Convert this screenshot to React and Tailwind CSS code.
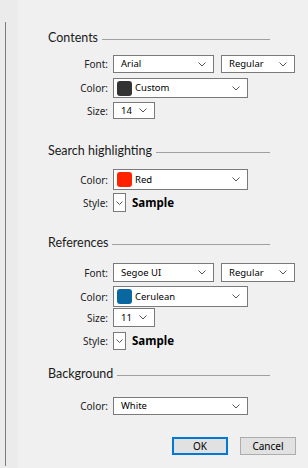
import { useState } from "react";

const Chevron = () => (
  <svg width="8" height="5" viewBox="0 0 8 5" className="shrink-0">
    <path d="M0.5 0.5 L4 4 L7.5 0.5" fill="none" stroke="#555" strokeWidth="1" />
  </svg>
);

const Dropdown = ({ width, height, swatch, children }) => (
  <div
    className={`flex items-center bg-white border border-[#7a7a7a] pr-[7px] ${width} ${height} ${
      swatch ? "pl-[3px]" : "pl-[7px]"
    }`}
  >
    {swatch && <div className={`w-[15px] h-[15px] rounded-[3px] mr-[3px] ${swatch}`}></div>}
    <span className="flex-1 text-[9.5px] text-black leading-none">{children}</span>
    <Chevron />
  </div>
);

const Title = ({ text, mt }) => (
  <div className={`flex items-center h-4 mr-[26px] ${mt}`}>
    <span className="text-[12.5px] text-[#1a1a1a] leading-none font-['Lato']">{text}</span>
    <div className="flex-1 h-px bg-[#a0a0a0] ml-[4px] mt-[3px]"></div>
  </div>
);

const Row = ({ label, mt, h, children }) => (
  <div className={`flex items-center ${mt} ${h}`}>
    <div className="w-[60px] text-right text-[10px] text-[#222] leading-none">{label}</div>
    <div className="flex items-center gap-[7px] ml-[5px] h-full">{children}</div>
  </div>
);

const StyleBox = () => (
  <>
    <div className="w-[13px] h-full border border-[#7a7a7a] bg-white flex items-center justify-center">
      <svg width="7" height="4" viewBox="0 0 7 4">
        <path d="M0.5 0.5 L3.5 3.5 L6.5 0.5" fill="none" stroke="#555" strokeWidth="1" />
      </svg>
    </div>
    <span className="text-[11.5px] font-bold text-black leading-none -ml-[1px]">Sample</span>
  </>
);

export default function App() {
  const [bg] = useState("White");

  return (
    <div
      className="w-[308px] h-[468px] flex bg-[#f0f0f0] overflow-hidden"
      style={{ fontFamily: '"Noto Sans", "Open Sans", sans-serif' }}
    >
      {/* left strip */}
      <div className="w-[18px] h-full bg-[#ebebeb] pl-[5px] pt-[22px] pb-[2px]">
        <div className="w-px h-full bg-[#7c7c7c]"></div>
      </div>

      <div className="flex-1 flex flex-col pl-[30px] pr-[12px]">
        <Title text="Contents" mt="mt-[30px]" />
        <Row label="Font:" mt="mt-[9px]" h="h-[18px]">
          <Dropdown width="w-[101px]" height="h-full">Arial</Dropdown>
          <Dropdown width="w-[74px]" height="h-full">Regular</Dropdown>
        </Row>
        <Row label="Color:" mt="mt-[5px]" h="h-[20px]">
          <Dropdown width="w-[135px]" height="h-full" swatch="bg-[#333333]">Custom</Dropdown>
        </Row>
        <Row label="Size:" mt="mt-[4px]" h="h-[17px]">
          <Dropdown width="w-[42px]" height="h-full">14</Dropdown>
        </Row>

        <Title text="Search highlighting" mt="mt-[24px]" />
        <Row label="Color:" mt="mt-[10px]" h="h-[21px]">
          <Dropdown width="w-[135px]" height="h-full" swatch="bg-[#ff2200]">Red</Dropdown>
        </Row>
        <Row label="Style:" mt="mt-[3px]" h="h-[19px]">
          <StyleBox />
        </Row>

        <Title text="References" mt="mt-[23px]" />
        <Row label="Font:" mt="mt-[12px]" h="h-[19px]">
          <Dropdown width="w-[101px]" height="h-full">Segoe UI</Dropdown>
          <Dropdown width="w-[74px]" height="h-full">Regular</Dropdown>
        </Row>
        <Row label="Color:" mt="mt-[4px]" h="h-[21px]">
          <Dropdown width="w-[135px]" height="h-full" swatch="bg-[#0b67a0]">Cerulean</Dropdown>
        </Row>
        <Row label="Size:" mt="mt-[1px]" h="h-[19px]">
          <Dropdown width="w-[42px]" height="h-full">11</Dropdown>
        </Row>
        <Row label="Style:" mt="mt-[5px]" h="h-[18px]">
          <StyleBox />
        </Row>

        <Title text="Background" mt="mt-[16px]" />
        <Row label="Color:" mt="mt-[15px]" h="h-[18px]">
          <Dropdown width="w-[135px]" height="h-full">{bg}</Dropdown>
        </Row>

        <div className="flex justify-end gap-[12px] mt-[22px]">
          <button className="w-[56px] h-[18px] bg-[#e1e1e1] border-2 border-[#0078d7] text-[10px] text-black leading-none flex items-center justify-center">
            OK
          </button>
          <button className="w-[56px] h-[18px] bg-[#e1e1e1] border border-[#adadad] text-[10px] text-black leading-none flex items-center justify-center">
            Cancel
          </button>
        </div>
      </div>
    </div>
  );
}
